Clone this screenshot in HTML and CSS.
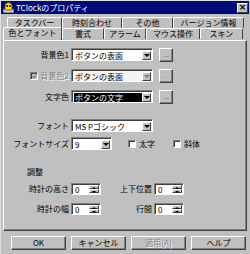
FILE: index.html
```html
<!DOCTYPE html>
<html lang="ja">
<head>
    <meta charset="UTF-8">
    <title>TClockのプロパティ</title>
    <link rel="stylesheet" href="styles.css">
</head>
<body>
    <div class="window">
        <div class="titlebar">
            <svg class="app-icon" width="11" height="11" viewBox="0 0 11 11">
                <rect x="0" y="7" width="11" height="4" fill="#d8d8d8" stroke="#404040" stroke-width="1"/>
                <path d="M2 8 V4 A3.5 3.5 0 0 1 9 4 V8 Z" fill="#f8e000" stroke="#604800" stroke-width="0.8"/>
                <rect x="3.5" y="3" width="1.4" height="2" fill="#000"/>
                <rect x="6.2" y="3" width="1.4" height="2" fill="#000"/>
            </svg>
            <span class="title">TClockのプロパティ</span>
            <span class="close">×</span>
        </div>

        <div class="tabs">
            <div class="tabrow back">
                <div class="tab t-taskbar">タスクバー</div>
                <div class="tab t-time">時刻合わせ</div>
                <div class="tab t-other">その他</div>
                <div class="tab t-ver">バージョン情報</div>
            </div>
            <div class="tabrow front">
                <div class="tab active t-color">色とフォント</div>
                <div class="tab t-format">書式</div>
                <div class="tab t-alarm">アラーム</div>
                <div class="tab t-mouse">マウス操作</div>
                <div class="tab t-skin">スキン</div>
            </div>
        </div>

        <div class="panel">
            <div class="row r-bg1">
                <span class="label">背景色1</span>
                <div class="combo"><span class="val">ボタンの表面</span><span class="drop"></span></div>
                <span class="btn dots">...</span>
            </div>
            <div class="row r-bg2">
                <span class="label disabled"><span class="check checked-dis"></span>背景色2</span>
                <div class="combo dis"><span class="val">ボタンの表面</span><span class="drop dim"></span></div>
                <span class="btn dots dim-text">...</span>
            </div>
            <div class="row r-fore">
                <span class="label">文字色</span>
                <div class="combo"><span class="val black">ボタンの文字</span><span class="drop"></span></div>
                <span class="btn dots">...</span>
            </div>
            <div class="row r-font">
                <span class="label">フォント</span>
                <div class="combo"><span class="val">MS Pゴシック</span><span class="drop"></span></div>
            </div>
            <div class="row r-size">
                <span class="label">フォントサイズ</span>
                <div class="combo small"><span class="val">9</span><span class="drop"></span></div>
                <span class="check bold-check"></span><span class="opt">太字</span>
                <span class="check italic-check"></span><span class="opt">斜体</span>
            </div>
            <div class="group">調整</div>
            <div class="row r-height">
                <span class="label">時計の高さ</span>
                <div class="spin"><span class="val">0</span><span class="updown"><i class="up"></i><i class="down"></i></span></div>
                <span class="label2">上下位置</span>
                <div class="spin"><span class="val">0</span><span class="updown"><i class="up"></i><i class="down"></i></span></div>
            </div>
            <div class="row r-width">
                <span class="label">時計の幅</span>
                <div class="spin"><span class="val">0</span><span class="updown"><i class="up"></i><i class="down"></i></span></div>
                <span class="label2">行間</span>
                <div class="spin"><span class="val">0</span><span class="updown"><i class="up"></i><i class="down"></i></span></div>
            </div>
        </div>

        <div class="buttons">
            <span class="btn push">OK</span>
            <span class="btn push">キャンセル</span>
            <span class="btn push disabled">適用(A)</span>
            <span class="btn push">ヘルプ</span>
        </div>
    </div>
</body>
</html>
```

FILE: styles.css
```css
* {
    box-sizing: border-box;
}
body {
    margin: 0;
    background: #c0c0c0;
    font-family: "Noto Sans CJK JP", "DejaVu Sans", sans-serif;
    font-size: 8px;
    line-height: 1;
    color: #000;
}
.window {
    width: 250px;
    height: 254px;
    background: #c0c0c0;
    border-left: 1px solid #dfdfdf;
    border-top: 1px solid #dfdfdf;
    overflow: hidden;
}
.titlebar {
    height: 13px;
    margin: 0 1px 0 0;
    background: #000a78;
    display: flex;
    align-items: center;
    padding: 0 1px 0 2px;
}
.app-icon {
    flex: none;
}
.title {
    color: #fff;
    margin-left: 2px;
    font-size: 8px;
    flex: 1;
}
.close {
    width: 11px;
    height: 10px;
    background: #c0c0c0;
    border: 1px solid;
    border-color: #fff #404040 #404040 #fff;
    font-size: 9px;
    line-height: 7px;
    text-align: center;
    font-weight: bold;
    font-family: "DejaVu Sans", sans-serif;
}

/* タブ */
.tabs {
    margin-top: 3px;
    height: 23px;
}
.tabrow {
    display: flex;
    height: 11px;
}
.tabrow.back {
    padding-left: 6px;
}
.tabrow.front {
    padding-left: 2px;
}
.tab {
    height: 11px;
    border: 1px solid;
    border-bottom: none;
    border-color: #fff #404040 #fff #fff;
    border-radius: 2px 2px 0 0;
    text-align: center;
    line-height: 10px;
    font-size: 8px;
    white-space: nowrap;
}
.tab.active {
    height: 13px;
    margin-top: -1px;
    position: relative;
    background: #c0c0c0;
    z-index: 1;
}
.t-taskbar { width: 55px; }
.t-time { width: 60px; }
.t-other { width: 51px; }
.t-ver { width: 71px; }
.t-color { width: 59px; }
.t-format { width: 42px; }
.t-alarm { width: 42px; }
.t-mouse { width: 54px; }
.t-skin { width: 43px; }

/* パネル */
.panel {
    margin-left: 2px;
    width: 244px;
    height: 191px;
    border: 1px solid;
    border-color: #fff #404040 #404040 #fff;
    box-shadow: inset -1px -1px #808080;
    padding-top: 7px;
}
.row {
    display: flex;
    align-items: center;
    height: 13px;
}
.r-bg2 { margin-top: 8px; }
.r-fore { margin-top: 8px; }
.r-font { margin-top: 16px; }
.r-size { margin-top: 5px; }
.r-height { margin-top: 5px; }
.r-width { margin-top: 7px; }
.label {
    width: 67px;
    text-align: right;
    padding-right: 2px;
    display: flex;
    justify-content: flex-end;
    align-items: center;
}
.label.disabled {
    color: #808080;
    text-shadow: 1px 1px #fff;
}
.label2 {
    width: 53px;
    text-align: right;
    padding-right: 2px;
}
.combo {
    width: 82px;
    height: 13px;
    border: 1px solid;
    border-color: #808080 #fff #fff #808080;
    box-shadow: inset 1px 1px #404040;
    background: #fff;
    display: flex;
    padding: 2px 1px 1px 2px;
}
.combo.dis {
    background: #f4f4f4;
}
.combo.small {
    width: 41px;
}
.val {
    flex: 1;
    height: 9px;
    line-height: 9px;
    padding-left: 1px;
    white-space: nowrap;
    overflow: hidden;
    font-size: 8px;
}
.val.black {
    background: #000;
    color: #fff;
}
.drop {
    width: 9px;
    height: 9px;
    background: #c0c0c0;
    border: 1px solid;
    border-color: #fff #404040 #404040 #fff;
    position: relative;
}
.drop::after {
    content: "";
    position: absolute;
    left: 1px;
    top: 2px;
    border-left: 3px solid transparent;
    border-right: 3px solid transparent;
    border-top: 3px solid #000;
}
.drop.dim::after {
    border-top-color: #808080;
}
.btn {
    background: #c0c0c0;
    border: 1px solid;
    border-color: #fff #404040 #404040 #fff;
    box-shadow: inset -1px -1px #808080;
    display: flex;
    align-items: center;
    justify-content: center;
}
.dots {
    width: 14px;
    height: 14px;
    margin-left: 6px;
    font-size: 7px;
    color: #606060;
}
.dim-text {
    color: #a0a0a0;
}
.check {
    width: 8px;
    height: 8px;
    background: #fff;
    border: 1px solid;
    border-color: #808080 #fff #fff #808080;
    box-shadow: inset 1px 1px #404040;
    display: inline-block;
}
.checked-dis {
    background: #c0c0c0;
    margin-right: 3px;
    position: relative;
}
.checked-dis::after {
    content: "";
    position: absolute;
    left: 2px;
    top: 0px;
    width: 2px;
    height: 4px;
    border: solid #808080;
    border-width: 0 1px 1px 0;
    transform: rotate(40deg);
}
.bold-check {
    margin-left: 16px;
}
.italic-check {
    margin-left: 18px;
}
.opt {
    margin-left: 3px;
}
.group {
    margin: 18px 0 0 23px;
    height: 9px;
}
.spin {
    width: 30px;
    height: 12px;
    border: 1px solid;
    border-color: #808080 #fff #fff #808080;
    box-shadow: inset 1px 1px #404040;
    background: #fff;
    display: flex;
    padding: 1px 1px 1px 2px;
}
.updown {
    width: 10px;
    display: flex;
    flex-direction: column;
}
.updown i {
    flex: 1;
    background: #c0c0c0;
    border: 1px solid;
    border-color: #fff #404040 #404040 #fff;
    position: relative;
}
.updown i::after {
    content: "";
    position: absolute;
    left: 2px;
    top: 1px;
    border-left: 2px solid transparent;
    border-right: 2px solid transparent;
}
.updown .up::after {
    border-bottom: 2px solid #000;
}
.updown .down::after {
    border-top: 2px solid #000;
}

/* 下のボタン */
.buttons {
    display: flex;
    gap: 5px;
    padding: 5px 0 0 10px;
}
.push {
    width: 55px;
    height: 14px;
    font-size: 8px;
}
.push.disabled {
    color: #808080;
    text-shadow: 1px 1px #fff;
}
```
